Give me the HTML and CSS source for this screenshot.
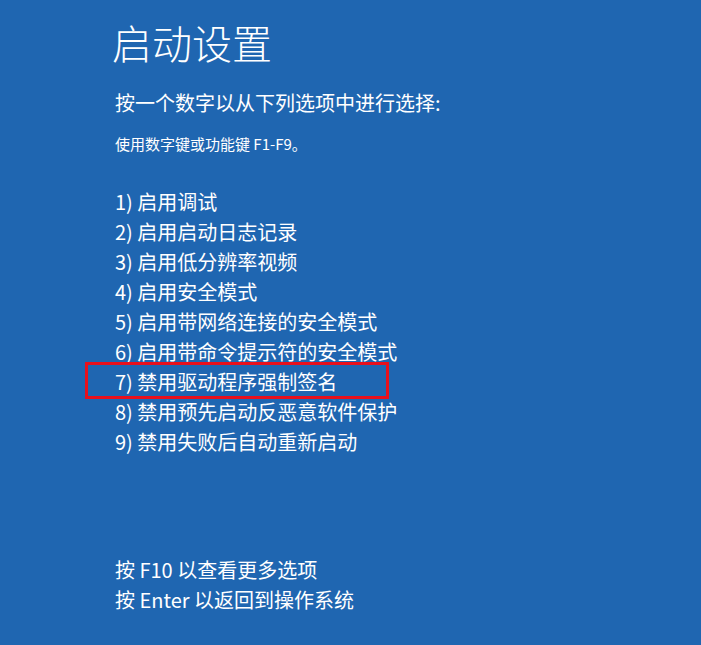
FILE: index.html
```html
<!DOCTYPE html>
<html lang="zh-CN">
<head>
<meta charset="utf-8">
<title>启动设置</title>
<link rel="stylesheet" href="styles.css">
</head>
<body>
<main class="screen">
  <h1 class="title">启动设置</h1>
  <p class="prompt">按一个数字以从下列选项中进行选择:</p>
  <p class="hint">使用数字键或功能键 F1-F9。</p>
  <ol class="options">
    <li class="option">1) 启用调试</li>
    <li class="option">2) 启用启动日志记录</li>
    <li class="option">3) 启用低分辨率视频</li>
    <li class="option">4) 启用安全模式</li>
    <li class="option">5) 启用带网络连接的安全模式</li>
    <li class="option">6) 启用带命令提示符的安全模式</li>
    <li class="option option-marked">7) 禁用驱动程序强制签名</li>
    <li class="option">8) 禁用预先启动反恶意软件保护</li>
    <li class="option">9) 禁用失败后自动重新启动</li>
  </ol>
  <div class="footer">
    <p class="footer-line">按 F10 以查看更多选项</p>
    <p class="footer-line">按 Enter 以返回到操作系统</p>
  </div>
</main>
</body>
</html>
```
FILE: styles.css
```css
html, body {
  margin: 0;
  padding: 0;
  height: 100%;
}
body {
  background: #1f66b1;
  color: #ffffff;
  font-family: "Noto Sans CJK SC", "Noto Sans", sans-serif;
}
.screen {
  padding: 22px 0 0 115px;
  display: flex;
  flex-direction: column;
  align-items: flex-start;
}
.title {
  margin: 0 0 0 -3px;
  font-size: 40px;
  line-height: 40px;
  font-weight: 300;
}
.prompt {
  margin: 26px 0 0 0;
  font-size: 20px;
  line-height: 30px;
  font-weight: 400;
}
.hint {
  margin: 16px 0 0 0;
  font-size: 15px;
  line-height: 20px;
}
.options {
  list-style: none;
  margin: 33px 0 0 0;
  padding: 0;
}
.option {
  font-size: 20px;
  line-height: 30px;
  white-space: nowrap;
}
.option-marked {
  position: relative;
}
.option-marked::after {
  content: "";
  position: absolute;
  left: -30px;
  top: -5px;
  width: 298px;
  height: 31px;
  border: 3px solid #e8101c;
}
.footer {
  margin-top: 98px;
}
.footer-line {
  margin: 0;
  font-size: 20px;
  line-height: 30px;
}
```
